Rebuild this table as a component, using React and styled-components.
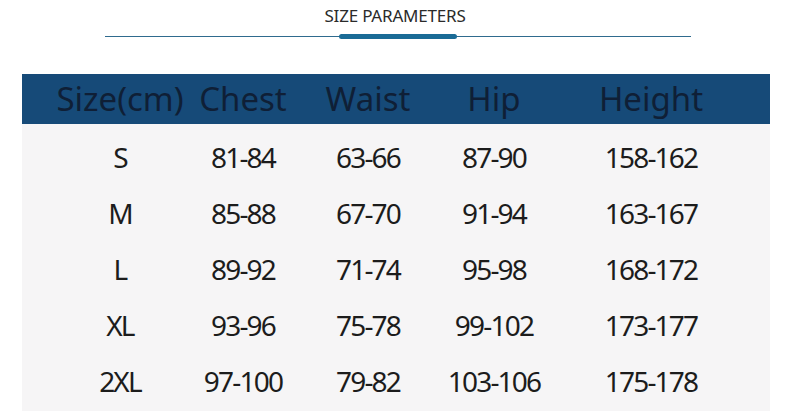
import styled, { createGlobalStyle } from "styled-components";

const rows = [
  ["S", "81-84", "63-66", "87-90", "158-162"],
  ["M", "85-88", "67-70", "91-94", "163-167"],
  ["L", "89-92", "71-74", "95-98", "168-172"],
  ["XL", "93-96", "75-78", "99-102", "173-177"],
  ["2XL", "97-100", "79-82", "103-106", "175-178"],
];

const headers = ["Size(cm)", "Chest", "Waist", "Hip", "Height"];

export default function App() {
  return (
    <Page>
      <GlobalStyle />
      <Title>SIZE PARAMETERS</Title>
      <Divider>
        <Line />
        <Bar />
        <Line />
      </Divider>
      <Table>
        <HeadRow>
          {headers.map((h) => (
            <HeadCell key={h}>{h}</HeadCell>
          ))}
        </HeadRow>
        <Body>
          {rows.map((row) => (
            <Row key={row[0]}>
              {row.map((v, i) => (
                <Cell key={i}>{v}</Cell>
              ))}
            </Row>
          ))}
        </Body>
      </Table>
    </Page>
  );
}

const GlobalStyle = createGlobalStyle`
  body {
    margin: 0;
    background: #fff;
    font-family: "Noto Sans", "Open Sans", sans-serif;
  }
`;

const Page = styled.div`
  width: 790px;
  height: 411px;
  overflow: hidden;
  padding-top: 6px;
  box-sizing: border-box;
`;

const Title = styled.h1`
  margin: 0;
  height: 20px;
  line-height: 20px;
  text-align: center;
  font-size: 17px;
  font-weight: 400;
  color: #2a2a2a;
  padding-left: 0;
  letter-spacing: -0.2px;
`;

const Divider = styled.div`
  width: 586px;
  margin: 8px 0 0 105px;
  height: 5px;
  display: flex;
  align-items: center;
`;

const Line = styled.div`
  flex: 1;
  height: 1px;
  background: #2f6b8e;
`;

const Bar = styled.div`
  width: 118px;
  height: 5px;
  border-radius: 3px;
  background: #1a6b96;
`;

const Table = styled.div`
  width: 748px;
  margin: 35px 0 0 22px;
`;

const grid = `
  display: grid;
  grid-template-columns: 136px 110px 140px 112px 202px;
  padding-left: 30px;
`;

const HeadRow = styled.div`
  ${grid}
  height: 50px;
  background: #164a78;
  align-items: center;
`;

const HeadCell = styled.div`
  text-align: center;
  font-size: 33px;
  line-height: 46px;
  color: #0f1f36;
  white-space: nowrap;
`;

const Body = styled.div`
  background: #f6f5f6;
  padding-top: 5px;
  height: 287px;
  box-sizing: border-box;
`;

const Row = styled.div`
  ${grid}
  height: 56px;
  align-items: center;
`;

const Cell = styled.div`
  text-align: center;
  font-size: 28px;
  letter-spacing: -1.8px;
  color: #1c1c1c;
  white-space: nowrap;
`;
